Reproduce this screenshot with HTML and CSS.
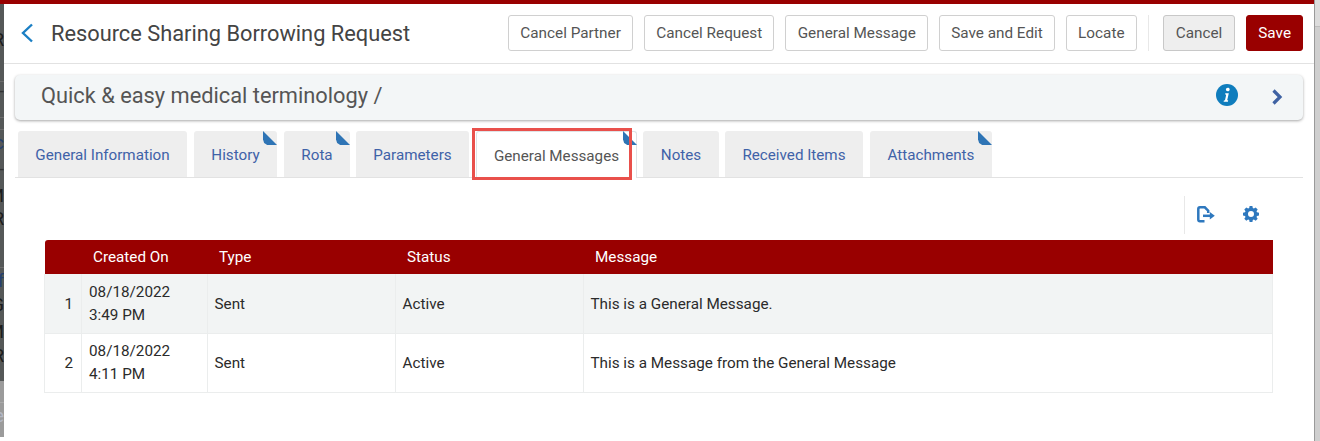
FILE: index.html
```html
<!DOCTYPE html>
<html lang="en">
<head>
<meta charset="utf-8">
<title>Resource Sharing Borrowing Request</title>
<link rel="stylesheet" href="styles.css">
</head>
<body>
<div class="page">
  <aside class="backdrop">
    <div class="dim">
      <div class="frag h26"></div>
      <div class="frag h20 big">R</div>
      <div class="frag h32 rule"></div>
      <div class="frag h17 link small">-</div>
      <div class="frag h19 rule"></div>
      <div class="frag h12 rule"></div>
      <div class="frag h26 link">c</div>
      <div class="frag h26 small">-</div>
      <div class="frag h27">M</div>
      <div class="frag h20">R</div>
      <div class="frag h39 rule"></div>
      <div class="frag h26 link">f</div>
      <div class="frag h22">G</div>
      <div class="frag h31">M</div>
      <div class="frag h18">R</div>
    </div>
    <div class="lit">
      <div class="frag h22 rule"></div>
      <div class="frag h26 pale">e</div>
    </div>
  </aside>

  <main class="panel">
    <header class="topbar">
      <button class="back" aria-label="Back">
        <svg width="14" height="20" viewBox="0 0 14 20"><path d="M12 1.500 3 10l9 8.500" fill="none" stroke="#1b7fc4" stroke-width="2.400"/></svg>
      </button>
      <h1 class="title">Resource Sharing Borrowing Request</h1>
      <div class="actions">
        <button class="btn">Cancel Partner</button>
        <button class="btn">Cancel Request</button>
        <button class="btn">General Message</button>
        <button class="btn">Save and Edit</button>
        <button class="btn">Locate</button>
        <span class="vsep"></span>
        <button class="btn btn-grey">Cancel</button>
        <button class="btn btn-primary">Save</button>
      </div>
    </header>

    <section class="summary">
      <h2 class="summary-title">Quick &amp; easy medical terminology /</h2>
      <svg class="info" width="22" height="22" viewBox="0 0 22 22"><circle cx="11" cy="11" r="11" fill="#0f7dbd"/><path d="M11.800 3.800c1.100 0 1.900.7 1.900 1.600 0 1-.9 1.800-2 1.800-1 0-1.800-.7-1.800-1.600 0-1 .9-1.800 1.900-1.800ZM8.300 9.300h4.500l-1.500 6.500c-.1.500.1.600.9.600l-.3 1.300H7.600l.3-1.300c.8 0 1.100-.2 1.200-.7l1-4.500c.1-.5-.1-.7-1-.7l.2-1.200Z" fill="#fff"/></svg>
      <svg class="next" width="12" height="16" viewBox="0 0 12 16"><path d="M2.500 1.500 9 8l-6.500 6.500" fill="none" stroke="#3f62a3" stroke-width="3.200"/></svg>
    </section>

    <nav class="tabs">
      <a class="tab t1">General Information</a>
      <a class="tab t2 flag">History</a>
      <a class="tab t3 flag">Rota</a>
      <a class="tab t4">Parameters</a>
      <a class="tab t5 active flag">General Messages<span class="callout"></span></a>
      <a class="tab t6">Notes</a>
      <a class="tab t7">Received Items</a>
      <a class="tab t8 flag">Attachments</a>
    </nav>

    <div class="tools">
      <span class="tool-sep"></span>
      <svg class="tool-export" width="18" height="17" viewBox="0 0 18 17"><path d="M7.500 15.200H3A1.800 1.800 0 0 1 1.300 13.400V3.100A1.800 1.800 0 0 1 3 1.300H7.800L11.200 4.700V7" fill="none" stroke="#2e78be" stroke-width="2.500"/><path d="M6 9.800h8.500" fill="none" stroke="#2e78be" stroke-width="2.500"/><path d="M12.800 6l5 3.800-5 3.800z" fill="#2e78be"/></svg>
      <svg class="tool-gear" width="16" height="16" viewBox="0 0 16 16"><path fill="#2e78be" fill-rule="evenodd" d="M6.600 0h2.800l.4 2.100 1.100.5 1.800-1.200 2 2-1.200 1.800.5 1.100 2 .4v2.800l-2 .4-.5 1.100 1.200 1.800-2 2-1.800-1.200-1.100.5-.4 2H6.600l-.4-2-1.100-.5-1.800 1.200-2-2 1.200-1.800-.5-1.100-2-.4V6.700l2-.4.5-1.100-1.200-1.800 2-2 1.800 1.200 1.100-.5zM8 5a3 3 0 1 0 0 6 3 3 0 0 0 0-6z"/></svg>
    </div>

    <table class="grid">
      <colgroup>
        <col class="c-num"><col class="c-date"><col class="c-type"><col class="c-status"><col class="c-msg">
      </colgroup>
      <thead>
        <tr><th></th><th>Created On</th><th>Type</th><th>Status</th><th>Message</th></tr>
      </thead>
      <tbody>
        <tr class="odd">
          <td class="num">1</td><td class="date">08/18/2022<br>3:49 PM</td><td>Sent</td><td>Active</td><td>This is a General Message.</td>
        </tr>
        <tr>
          <td class="num">2</td><td class="date date-low">08/18/2022<br>4:11 PM</td><td>Sent</td><td>Active</td><td>This is a Message from the General Message</td>
        </tr>
      </tbody>
    </table>
  </main>

  <aside class="gutter"><div class="gutter-top"></div></aside>
</div>
</body>
</html>
```
FILE: styles.css
```css
* { box-sizing: border-box; }
html, body { margin: 0; padding: 0; height: 100%; }
body { font-family: Roboto, "Liberation Sans", sans-serif; color: #333; background: #fff; overflow: hidden; }
button { font: inherit; }

.page { display: flex; height: 441px; width: 1320px; }

/* page behind the dialog */
.backdrop { width: 4px; flex: none; display: flex; flex-direction: column; padding-top: 4px; background: linear-gradient(#990000 4px, transparent 4px); overflow: hidden; font-size: 18px; color: #1c1c1c; }
.dim { height: 377px; background: #555858; }
.lit { height: 56px; background: #9b9b9b; }
.frag { width: 4px; display: flex; justify-content: flex-end; align-items: center; overflow: hidden; line-height: 1; }
.frag.rule { border-bottom: 1px solid #6c6c6c; align-items: flex-end; }
.lit .frag.rule { border-color: #aaa; }
.frag.link { color: #243f70; }
.frag.small { color: #333; }
.frag.pale { color: #b4b8c4; }
.h12 { height: 12px; } .h17 { height: 17px; } .h18 { height: 18px; } .h19 { height: 19px; }
.h20 { height: 20px; } .h22 { height: 22px; } .h26 { height: 26px; } .h27 { height: 27px; }
.h31 { height: 31px; } .h32 { height: 32px; } .h39 { height: 39px; }

/* right gutter */
.gutter { width: 6px; flex: none; background: #cfcfcf; border-left: 1px solid #9a9a9a; }
.gutter-top { height: 27px; background: #dcdcdc; border-bottom: 1px solid #bdbdbd; }

/* dialog */
.panel { width: 1310px; flex: none; border-top: 4px solid #990000; background: #fff; display: flex; flex-direction: column; }

.topbar { height: 60px; flex: none; display: flex; align-items: flex-start; border-bottom: 1px solid #e2e2e2; padding: 11px 11px 0 16px; }
.back { width: 14px; height: 20px; padding: 0; border: 0; background: none; margin-top: 8px; display: flex; }
.title { margin: 1px 0 0 17px; font-size: 21.8px; font-weight: 400; line-height: 36px; color: #444; flex: 1; white-space: nowrap; }
.actions { display: flex; align-items: stretch; gap: 11px; height: 36px; }
.btn { height: 36px; padding: 0 11.200px; border: 1px solid #d0d0d0; border-radius: 3px; background: #fff; color: #555; font-size: 15.3px; white-space: nowrap; }
.btn-grey { padding: 0 12px; background: #eeeeee; border-color: #c8c8c8; margin-left: 3px; }
.btn-primary { padding: 0 11px; background: #990000; border-color: #990000; color: #fff; }
.vsep { width: 1px; background: #e8e8e8; }

.summary { height: 45px; flex: none; margin: 11px 11px 0; background: #f3f6f7; border-radius: 5px; box-shadow: 0 1px 3px rgba(0,0,0,.35); display: flex; align-items: center; padding: 0 20px 5px 26px; }
.summary-title { margin: 0; flex: 1; font-size: 21.8px; font-weight: 400; color: #555; }
.info { margin-right: 33px; }
.next { margin-top: 3px; }

.tabs { height: 47px; flex: none; margin: 11px 11px 0; padding-left: 3px; display: flex; align-items: stretch; border-bottom: 1px solid #e2e2e2; font-size: 15.2px; }
.tab { position: relative; height: 46px; padding-top: 2px; background: #eeeeee; color: #3f62a8; border-radius: 3px 3px 0 0; display: flex; align-items: center; justify-content: center; white-space: nowrap; }
.t1 { width: 169px; } .t2 { width: 83px; margin-left: 7px; } .t3 { width: 66px; margin-left: 7px; } .t4 { width: 113px; margin-left: 6px; }
.t5 { width: 161px; margin-left: 7px; } .t6 { width: 76px; margin-left: 6px; } .t7 { width: 138px; margin-left: 6px; } .t8 { width: 122px; margin-left: 7px; }
.tab.active { height: 47px; background: #fff; color: #555; border: 1px solid #dfe3e6; border-bottom: 0; }
.flag::after { content: ""; position: absolute; top: 0; right: 0; width: 14px; height: 14px; background: #2e74b5; clip-path: polygon(0 0, 100% 100%, 30% 100%, 8% 85%, 0 60%); }
.tab.active.flag::after { top: -1px; right: -1px; }
.callout { position: absolute; left: -5px; top: -4px; width: 160px; height: 52px; border: 3px solid #e9504b; pointer-events: none; z-index: 2; }

.tools { height: 38px; flex: none; margin-top: 18px; display: flex; align-items: center; padding-left: 1180px; }
.tool-sep { width: 1px; height: 38px; background: #e8e8e8; }
.tool-export { margin-left: 12px; margin-top: -1px; }
.tool-gear { margin-left: 28px; margin-top: -3px; }

.grid { width: 1228px; flex: none; margin: 6px 0 0 40px; border-collapse: collapse; table-layout: fixed; font-size: 15.25px; color: #2b2b2b; }
.c-num { width: 37px; } .c-date { width: 126px; } .c-type { width: 188px; } .c-status { width: 188px; } .c-msg { width: 689px; }
.grid th { height: 34px; padding: 0 0 0 11.500px; background: #990000; color: #fff; font-weight: 400; text-align: left; font-size: 15.25px; }
.grid thead tr th:first-child { border-top-left-radius: 3px; }
.grid td { height: 59px; padding: 2px 0 0 6.500px; line-height: 23px; border: 1px solid #ebeded; border-top: 0; }
.grid td.date { padding-left: 7px; }
.grid td.date-low { padding-top: 0; }
.grid .odd td { background: #f2f4f4; }
.grid td.num { text-align: right; padding: 2px 8px 0 0; }
```
